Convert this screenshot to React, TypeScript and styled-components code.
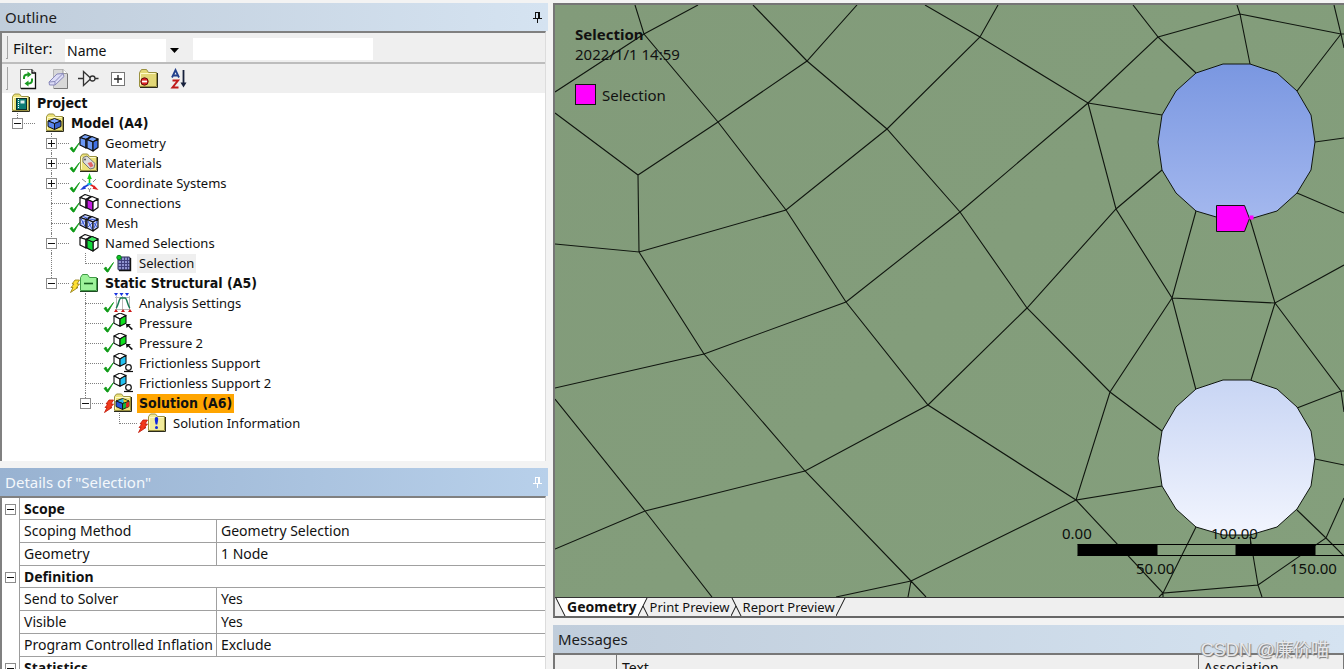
import React from 'react';
import styled, { createGlobalStyle, css } from 'styled-components';

const UI_FONT = '"Noto Sans", "Open Sans", "Noto Sans CJK SC", sans-serif';
const TREE_FONT = '"Noto Sans", "Open Sans", sans-serif';
const TREE_BOLD_FONT = '"DejaVu Sans Condensed", "Noto Sans", sans-serif';

const GlobalStyle = createGlobalStyle`
  * { box-sizing: border-box; }
  body {
    margin: 0;
    background: #f3f3f3;
    font-family: ${UI_FONT};
    color: #111;
  }
  button, input, select { font: inherit; color: inherit; }
`;

const Shell = styled.div`
  position: relative;
  display: grid;
  grid-template-columns: 548fr 796fr;
  height: 100vh;
  overflow: hidden;
`;

const SideColumn = styled.div`
  display: flex;
  flex-direction: column;
  gap: 7px;
  min-width: 0;
  min-height: 0;
  padding-top: 3px;
`;

const MainColumn = styled.main`
  display: flex;
  flex-direction: column;
  gap: 7px;
  min-width: 0;
  min-height: 0;
  padding: 3px 0 0 5px;
`;

const Panel = styled.section<{ $grow?: boolean; $height?: number }>`
  display: flex;
  flex-direction: column;
  min-height: 0;
  overflow: hidden;
  ${(p) => (p.$grow ? css`flex: 1;` : css`flex: 0 0 ${p.$height}px;`)}
`;

const TitleBar = styled.header<{ $active?: boolean }>`
  display: flex;
  flex: none;
  align-items: center;
  justify-content: space-between;
  height: 28px;
  padding: 0 5px;
  background: ${(p) =>
    p.$active
      ? 'linear-gradient(90deg, #98b2d1, #b8d0ea)'
      : 'linear-gradient(90deg, #c0cddb, #d5e3f1)'};
  color: ${(p) => (p.$active ? '#f4f8fc' : '#1c1c1c')};
`;

const Title = styled.h2`
  margin: 0;
  font-size: 15px;
  line-height: 20px;
  font-weight: 400;
`;

const PinButton = styled.button`
  display: flex;
  padding: 0;
  border: 0;
  background: none;
`;

const PanelBody = styled.div`
  display: flex;
  flex: 1;
  flex-direction: column;
  min-height: 0;
  margin-right: 2px;
  border: solid #808080;
  border-width: 2px 0 0 2px;
  border-right: 1px solid #dcdcdc;
  background: #fff;
`;

const Bar = styled.div<{ $ruled?: boolean }>`
  display: flex;
  flex: none;
  align-items: center;
  height: ${(p) => (p.$ruled ? 31 : 29)}px;
  padding-left: 4px;
  background: #efefef;
  ${(p) => p.$ruled && css`border-bottom: 2px solid #bdbdbd;`}
`;

const Grip = styled.span`
  width: 2px;
  height: 23px;
  border-right: 1px solid #a5a5a5;
  border-bottom: 1px solid #a5a5a5;
`;

const FilterLabel = styled.label`
  width: 52px;
  margin-left: 5px;
  font-size: 15px;
  line-height: 20px;
  white-space: nowrap;
`;

const SelectBox = styled.span`
  position: relative;
  display: flex;
  width: 119px;
  height: 23px;
  margin-top: 6px;
`;

const FilterSelect = styled.select`
  width: 100%;
  padding: 0 20px 0 2px;
  border: 0;
  border-radius: 0;
  appearance: none;
  background: linear-gradient(90deg, #fff calc(100% - 18px), #efefef calc(100% - 18px));
  font-size: 14px;
`;

const SelectArrow = styled.svg`
  position: absolute;
  top: 9px;
  right: 5px;
  pointer-events: none;
`;

const FilterInput = styled.input`
  width: 180px;
  height: 22px;
  margin: 2px 0 0 9px;
  padding: 0 4px;
  border: 0;
  background: #fff;
  font-size: 14px;
`;

const ToolGroup = styled.div`
  display: flex;
  align-items: center;
  gap: 8px;
  margin-left: 9px;
`;

const ToolButton = styled.button`
  display: flex;
  width: 22px;
  height: 22px;
  padding: 0;
  border: 0;
  background: none;
`;

const Tree = styled.ul`
  flex: 1;
  min-height: 0;
  margin: 0;
  padding: 0;
  overflow: hidden;
  list-style: none;
  font-family: ${TREE_FONT};
`;

const TreeRow = styled.li`
  display: flex;
  align-items: center;
  height: 20px;
`;

type GuideKind = 'blank' | 'line' | 'tee' | 'end';

const Guide = styled.span<{ $kind: GuideKind }>`
  position: relative;
  flex: none;
  width: 34px;
  height: 20px;
  ${(p) =>
    p.$kind !== 'blank' &&
    css`
      &::before {
        content: '';
        position: absolute;
        top: 0;
        left: 15px;
        height: ${p.$kind === 'end' ? 11 : 20}px;
        border-left: 1px dotted #808080;
      }
    `}
  ${(p) =>
    (p.$kind === 'tee' || p.$kind === 'end') &&
    css`
      &::after {
        content: '';
        position: absolute;
        top: 10px;
        left: 15px;
        width: 18px;
        border-top: 1px dotted #808080;
      }
    `}
`;

const Expander = styled.button<{ $open: boolean }>`
  position: relative;
  z-index: 1;
  display: block;
  width: 11px;
  height: 11px;
  margin: 5px 10px;
  padding: 0;
  border: 1px solid #8c8c8c;
  background:
    linear-gradient(#111, #111) center / 7px 1px no-repeat,
    ${(p) => (p.$open ? '' : 'linear-gradient(#111, #111) center / 1px 7px no-repeat,')}
    #fff;
`;

const StatusSlot = styled.span`
  display: flex;
  flex: none;
  width: 9px;
  height: 20px;
`;

const IconSlot = styled.span`
  display: flex;
  flex: none;
  width: 24px;
  height: 20px;
`;

const NodeLabel = styled.span<{ $bold?: boolean; $tone?: 'soft' | 'hot' }>`
  padding: 0 2px;
  background: ${(p) => (p.$tone === 'hot' ? '#ffa500' : p.$tone === 'soft' ? '#efefef' : 'transparent')};
  font-size: 13px;
  line-height: 19px;
  ${(p) =>
    p.$bold &&
    css`
      font-family: ${TREE_BOLD_FONT};
      font-size: 14px;
      font-weight: 700;
    `}
  white-space: nowrap;
`;

const PropertyTable = styled.table`
  width: 100%;
  border-collapse: separate;
  border-spacing: 0;
  table-layout: fixed;
  font-size: 14px;
  line-height: 20px;
`;

const GutterCol = styled.col`
  width: 18px;
`;

const NameCol = styled.col`
  width: 197px;
`;

const Gutter = styled.td`
  padding: 0;
  border-right: 1px solid #9c9c9c;
  ${Expander} { margin: 0 0 0 3px; }
`;

const GroupHead = styled.th`
  height: 22px;
  padding: 0 4px;
  border-bottom: 1px solid #a0a0a0;
  font-size: 14px;
  font-weight: 700;
  text-align: left;
`;

const PropName = styled.th`
  height: 23px;
  padding: 0 4px;
  border-right: 1px solid #a0a0a0;
  border-bottom: 1px solid #a0a0a0;
  font-weight: 400;
  text-align: left;
  white-space: nowrap;
`;

const PropValue = styled.td`
  padding: 0 4px;
  border-bottom: 1px solid #a0a0a0;
`;

const Viewport = styled.section`
  display: flex;
  flex: 1;
  flex-direction: column;
  min-height: 0;
  border: solid #757575;
  border-width: 2px 0 0 2px;
  border-bottom: 2px solid #666;
`;

const Canvas = styled.div`
  position: relative;
  flex: 1;
  min-height: 0;
  background: linear-gradient(135deg, #829b7a, #849f7c);
`;

const MeshDrawing = styled.svg`
  position: absolute;
  inset: 0;
  width: 100%;
  height: 100%;
`;

const Legend = styled.div`
  position: absolute;
  top: 19px;
  left: 20px;
  display: flex;
  flex-direction: column;
  font-size: 15px;
  line-height: 20px;
`;

const LegendKey = styled.div`
  display: flex;
  align-items: center;
  gap: 6px;
  margin-top: 20px;
`;

const Swatch = styled.span`
  width: 21px;
  height: 21px;
  border: 1px solid #111;
  background: #ff00ff;
`;

const TabStrip = styled.nav`
  display: flex;
  flex: none;
  align-items: stretch;
  height: 19px;
  border-top: 1px solid #333;
  background: #efefef;
`;

const Tab = styled.button<{ $active?: boolean }>`
  padding: 0 1px;
  border: 0;
  background: ${(p) => (p.$active ? '#fff' : 'transparent')};
  font-size: ${(p) => (p.$active ? 14 : 13)}px;
  line-height: 18px;
  font-weight: ${(p) => (p.$active ? 700 : 400)};
  white-space: nowrap;
`;

const TabEdge = styled.svg`
  flex: none;
  width: 11px;
  height: 18px;
`;

const MessageTable = styled.table`
  width: 100%;
  border-top: 2px solid #777;
  border-left: 2px solid #777;
  border-collapse: separate;
  border-spacing: 0;
  table-layout: fixed;
  background: #efefef;
  font-size: 14px;
  line-height: 20px;
`;

const MessageHead = styled.th<{ $width?: string }>`
  width: ${(p) => p.$width ?? 'auto'};
  height: 24px;
  padding: 2px 5px 0;
  border-right: 1px solid #777;
  font-weight: 400;
  text-align: left;
`;

const Watermark = styled.div`
  position: absolute;
  right: 15px;
  bottom: 5px;
  color: rgba(238, 238, 240, 0.95);
  font-family: "Liberation Sans", "Noto Sans CJK SC", sans-serif;
  font-size: 18px;
  line-height: 28px;
  text-shadow: 1px 1px 1px #777, -1px 0 0 #aaa;
  white-space: nowrap;
`;

/* ---------- icons ---------- */

const Pin = ({ color }: { color: string }) => (
  <svg width="11" height="13" viewBox="0 0 11 13" fill="none" stroke={color}>
    <path d="M3.5 1v6M3 1.5h5M7.5 1v6M6.500 1v6M1 7.5h9M5.5 8v4" />
  </svg>
);

const FolderBase = ({ fill = '#ece27a' }: { fill?: string }) => (
  <>
    <path d="M1.500 17.500V3.500L3.500 1H8.500L10.500 3.500H17.500V17.500Z" fill={fill} stroke="#9a9140" />
    <path d="M2.500 16V4.500H16.500" fill="none" stroke="#fffbc8" />
    <path d="M1 18.500H18.500V4" fill="none" stroke="#2b2b1c" />
  </>
);

const Cube = ({ x, y, s, top, left, right, stroke = '#111' }: {
  x: number; y: number; s: number; top: string; left: string; right: string; stroke?: string;
}) => (
  <g transform={`translate(${x} ${y}) scale(${s})`} stroke={stroke} strokeWidth={1.1 / s} strokeLinejoin="round">
    <path d="M0 2.500L5 0L10 2L5 5Z" fill={top} />
    <path d="M0 2.500L5 5V11L0 8.500Z" fill={left} />
    <path d="M5 5L10 2V8.500L5 11Z" fill={right} />
  </g>
);

/* Two adjoining blocks; `face` colours the contact side between them. */
const BoxPair = ({ top, side, front, face }: { top: string; side: string; front: string; face?: string }) => (
  <g stroke="#111" strokeWidth="1.200" strokeLinejoin="round">
    <path d="M1 4.500L6 1.500L12 3.500L7 6.500Z" fill={top} />
    <path d="M1 4.500L7 6.500V15L1 12Z" fill={side} />
    <path d="M7 6.500L12 3.500V12L7 15Z" fill={face ?? front} />
    <path d="M8 6.500L13 3.500L19 6L14 9Z" fill={top} />
    <path d="M8 6.500L14 9V18L8 15Z" fill={face ?? side} />
    <path d="M14 9L19 6V14.500L14 18Z" fill={front} />
  </g>
);

const icons: Record<string, React.ReactNode> = {
  project: (
    <>
      <FolderBase />
      <rect x="5.500" y="5.500" width="10" height="11" fill="#0c7c74" stroke="#0a2e2b" />
      <path d="M7.500 6v10" stroke="#fff" strokeDasharray="1 1" />
      <rect x="9.500" y="7.500" width="4" height="3" fill="#d9efec" />
    </>
  ),
  model: (
    <>
      <FolderBase />
      <g stroke="#111" strokeLinejoin="round">
        <path d="M3 8L9.500 5.500L16 8L9.500 10.500Z" fill="#7fa6ff" />
        <path d="M3 8L9.500 10.500V16.500L3 13.500Z" fill="#5b86ee" />
        <path d="M9.500 10.500L16 8V13.500L9.500 16.500Z" fill="#3761c9" />
      </g>
    </>
  ),
  geometry: <BoxPair top="#7aa4fa" side="#6a97f5" front="#3f70e4" />,
  materials: (
    <>
      <FolderBase />
      <path d="M4 4.500L8 3L16 10.500L15 15L11 16L4 9Z" fill="#dcdcdc" stroke="#777" />
      <path d="M8.500 10l4-1 2 4-3 1.500z" fill="#e06464" />
      <circle cx="6" cy="6.500" r="1" fill="#555" />
    </>
  ),
  coordinates: (
    <>
      <path d="M10.500 11V4" stroke="#12c412" strokeWidth="1.600" />
      <path d="M10.500 0l2.300 6H8.200Z" fill="#12d012" />
      <path d="M10.500 11l5 3" stroke="#e02020" strokeWidth="1.600" />
      <path d="M19.500 17l-6-1.200 1.800-3.200Z" fill="#e02020" />
      <path d="M10.500 11l-5 3" stroke="#1a3cd8" strokeWidth="1.600" />
      <path d="M1 17l6-1.200-1.800-3.200Z" fill="#1a3cd8" />
      <path d="M3 6l4 3M14 9l3-3M9 15l1.500 2 1.500-2M10.500 17v2" stroke="#888" />
      <path d="M8.500 11h4" stroke="#14b8d8" strokeWidth="2" />
    </>
  ),
  connections: <BoxPair top="#fff" side="#fff" front="#fff" face="#c41be0" />,
  mesh: (
    <>
      <BoxPair top="#c3cef9" side="#c3cef9" front="#c3cef9" />
      <path d="M2 5.500l4 8M2 11.500l4-4M4 3.500l5 2M9 8l4 8M9 14l4-4M15 10l3 4M15 15l3-7M10.500 6l6 1" stroke="#2b4fd6" strokeWidth="0.900" />
    </>
  ),
  named: (
    <>
      <BoxPair top="#fff" side="#fff" front="#fff" />
      <path d="M8 6.500L14 9V18L8 15Z" fill="#11d93a" stroke="#111" strokeLinejoin="round" />
      <path d="M8 6.500L13 3.500L19 6L14 9Z" fill="#3fe561" stroke="#111" strokeLinejoin="round" />
    </>
  ),
  selection: (
    <>
      <rect x="5" y="4" width="12" height="13" rx="1" fill="#8f93cf" stroke="#26264e" />
      <path d="M8.500 4v13M11.500 4v13M14.500 4v13M5 7.500h12M5 10.500h12M5 13.500h12" stroke="#40407c" />
      <path d="M17.500 5v12.500H6" fill="none" stroke="#111" strokeWidth="1.400" />
      <circle cx="6" cy="4.500" r="2.200" fill="#0ec222" stroke="#08801a" />
    </>
  ),
  structural: (
    <>
      <path d="M1.500 17.500V4.500L3.500 1.500H8.500L10.500 4.500H17.500V17.500Z" fill="#9df29a" stroke="#3f9a44" />
      <path d="M1 18.500H18.500V5" fill="none" stroke="#1d4a22" />
      <path d="M5 10.500h9" stroke="#155c1c" strokeWidth="1.600" />
    </>
  ),
  settings: (
    <>
      <path d="M1 0h4l-2 3zM6.500 0h4l-2 3zM12 0h4l-2 3z" fill="#1733e0" />
      <path d="M3.500 3v14M9.500 3v14M16.500 3v14M2 4.500h15M2 16.500h15" stroke="#b9b9b9" />
      <path d="M3 15C5 14 6 5 8 5h4C14 5 15 14 17 15" fill="none" stroke="#187a52" strokeWidth="1.500" />
      <path d="M1 19h4l-2-3zM8 19h4l-2-3zM15 19h4l-2-3z" fill="#cc1717" />
    </>
  ),
  pressure: (
    <>
      <Cube x={1} y={0} s={1.200} top="#fff" left="#fff" right="#0ee01e" />
      <path d="M13 11h5l-1.800 1.500L20 16l-1.500 1-3.200-3.500L13.500 15z" fill="#111" />
    </>
  ),
  support: (
    <>
      <Cube x={1} y={0} s={1.200} top="#fff" left="#fff" right="#22c2f2" />
      <circle cx="15.500" cy="14.500" r="2.800" fill="#fff" stroke="#111" strokeWidth="1.200" />
      <path d="M11 18.500h9" stroke="#111" strokeWidth="1.200" />
    </>
  ),
  solution: (
    <>
      <FolderBase />
      <g stroke="#111" strokeLinejoin="round" strokeWidth="0.900">
        <path d="M3 8L9.500 5.500L16 8L9.500 10.500Z" fill="#2fb8e8" />
        <path d="M3 8L9.500 10.500V16.500L3 13.500Z" fill="#2458e0" />
        <path d="M9.500 10.500L16 8V13.500L9.500 16.500Z" fill="#18b43a" />
      </g>
      <path d="M10 6l5 2-4 1.500z" fill="#f2d21a" />
      <path d="M13 10l3-1.500v5l-3 1.200z" fill="#e2261a" />
    </>
  ),
  info: (
    <>
      <FolderBase fill="#f2eb9a" />
      <path d="M9.500 4c2.500 0 1.800 3 .8 7.500h-1.600c-1-4.500-1.700-7.500.8-7.500z" fill="#1229e0" />
      <circle cx="9.500" cy="14.500" r="1.500" fill="#1229e0" />
    </>
  ),
};

const NodeIcon = ({ name }: { name: string }) => (
  <svg width="20" height="20" viewBox="0 0 20 20" fill="none">{icons[name]}</svg>
);

type Status = 'ok' | 'stale' | 'update';

const StatusIcon = ({ status }: { status: Status }) => {
  if (status === 'ok') {
    return (
      <svg width="10" height="20" viewBox="0 0 10 20" overflow="visible" fill="none">
        <path d="M0 15.500L2 14l1.500 3L9.500 9.500 4 19H3Z" fill="#0f9a16" stroke="#0f9a16" strokeWidth="0.800" />
      </svg>
    );
  }
  const fill = status === 'stale' ? '#ffe033' : '#f23a1c';
  const edge = status === 'stale' ? '#8f7a12' : '#c01808';
  return (
    <svg width="10" height="20" viewBox="0 0 10 20" overflow="visible">
      <path d="M5 7L9.500 7 7 11H9.500L6.500 14.500H8L0.500 19.500 3 14.500H1L4 11H2Z" fill={fill} stroke={edge} strokeWidth="0.800" />
    </svg>
  );
};

const toolIcons: { label: string; art: React.ReactNode }[] = [
  {
    label: 'Refresh tree',
    art: (
      <>
        <path d="M3.500 1.500H15L18.500 5V20.500H3.500Z" fill="#fff" stroke="#777" />
        <path d="M15 1.500V5H18.500V20.500H4" fill="none" stroke="#111" strokeWidth="1.300" />
        <path d="M7 11V9.500C7 7 9 6.500 11 6.500" fill="none" stroke="#1a9a22" strokeWidth="2" />
        <path d="M10.500 3.500l4 3-4 3z" fill="#1a9a22" />
        <path d="M15 10.500V12.500C15 15 13 15.500 11 15.500" fill="none" stroke="#1a9a22" strokeWidth="2" />
        <path d="M11.500 12.500l-4 3 4 3z" fill="#1a9a22" />
      </>
    ),
  },
  {
    label: 'Clear filter',
    art: (
      <>
        <path d="M6.500 1.500H16L20.500 5.500V20.500H6.500Z" fill="#d8d8d8" stroke="#b4b4b4" />
        <path d="M16 1.500V5.500H20.500" fill="#fff" stroke="#999" />
        <path d="M7 20.500H20.500V6" fill="none" stroke="#777" />
        <path d="M2 14L10 6L16 5.500L17 8.500L8 17L2.500 17Z" fill="#dcdcf6" stroke="#8888ba" />
        <path d="M2 14L8 13.500L16 5.500M8 13.500V17" fill="none" stroke="#8888ba" />
      </>
    ),
  },
  {
    label: 'Invert filter',
    art: (
      <>
        <path d="M1 10.500H6M6.500 3.500V17.500L14 10.500ZM17.500 10.500H21.500" fill="none" stroke="#333" strokeWidth="1.300" />
        <circle cx="15.500" cy="10.500" r="2.500" fill="#efefef" stroke="#333" strokeWidth="1.300" />
      </>
    ),
  },
  {
    label: 'Expand all',
    art: (
      <>
        <rect x="4.500" y="4.500" width="13" height="13" fill="#fff" stroke="#777" />
        <path d="M7 11H15M11 7V15" stroke="#222" strokeWidth="1.300" />
      </>
    ),
  },
  {
    label: 'Hide suppressed',
    art: (
      <>
        <path d="M2.500 18.500V4.500L4.500 1.500H9.500L11.500 4.500H19.500V18.500Z" fill="#e3d877" stroke="#9a9140" />
        <path d="M3.500 17V5.500H18.500" fill="none" stroke="#fffbc8" />
        <path d="M3 19.500H20.500V5" fill="none" stroke="#2b2b1c" />
        <circle cx="7.500" cy="13.500" r="3.700" fill="#dd2222" stroke="#5c1010" />
        <path d="M5 13.500h5" stroke="#fff" strokeWidth="1.800" />
      </>
    ),
  },
  {
    label: 'Sort ascending',
    art: (
      <>
        <path d="M5 9.500L8.500 2L12 9.500M6.200 7.500H10.800" fill="none" stroke="#23408c" strokeWidth="1.800" />
        <path d="M5.500 12.500H11L5.500 19.500H11.500" fill="none" stroke="#c01c1c" strokeWidth="2" />
        <path d="M16.500 2V16" stroke="#16203c" strokeWidth="1.800" />
        <path d="M13.500 14.500H19.500L16.500 19.500Z" fill="#16203c" />
      </>
    ),
  },
];

/* ---------- tree ---------- */

interface TreeItem {
  label: string;
  icon: string;
  guides: GuideKind[];
  open?: boolean;
  status?: Status;
  bold?: boolean;
  tone?: 'soft' | 'hot';
}

const tree: TreeItem[] = [
  { label: 'Project', icon: 'project', guides: [], bold: true },
  { label: 'Model (A4)', icon: 'model', guides: ['end'], open: true, bold: true },
  { label: 'Geometry', icon: 'geometry', guides: ['blank', 'tee'], open: false, status: 'ok' },
  { label: 'Materials', icon: 'materials', guides: ['blank', 'tee'], open: false, status: 'ok' },
  { label: 'Coordinate Systems', icon: 'coordinates', guides: ['blank', 'tee'], open: false, status: 'ok' },
  { label: 'Connections', icon: 'connections', guides: ['blank', 'tee'], status: 'ok' },
  { label: 'Mesh', icon: 'mesh', guides: ['blank', 'tee'], status: 'ok' },
  { label: 'Named Selections', icon: 'named', guides: ['blank', 'tee'], open: true },
  { label: 'Selection', icon: 'selection', guides: ['blank', 'line', 'end'], status: 'ok', tone: 'soft' },
  { label: 'Static Structural (A5)', icon: 'structural', guides: ['blank', 'end'], open: true, status: 'stale', bold: true },
  { label: 'Analysis Settings', icon: 'settings', guides: ['blank', 'blank', 'tee'], status: 'ok' },
  { label: 'Pressure', icon: 'pressure', guides: ['blank', 'blank', 'tee'], status: 'ok' },
  { label: 'Pressure 2', icon: 'pressure', guides: ['blank', 'blank', 'tee'], status: 'ok' },
  { label: 'Frictionless Support', icon: 'support', guides: ['blank', 'blank', 'tee'], status: 'ok' },
  { label: 'Frictionless Support 2', icon: 'support', guides: ['blank', 'blank', 'tee'], status: 'ok' },
  { label: 'Solution (A6)', icon: 'solution', guides: ['blank', 'blank', 'end'], open: true, status: 'update', bold: true, tone: 'hot' },
  { label: 'Solution Information', icon: 'info', guides: ['blank', 'blank', 'blank', 'end'], status: 'update' },
];

const TreeNode = ({ item }: { item: TreeItem }) => (
  <TreeRow>
    {item.guides.map((kind, i) => (
      <Guide key={i} $kind={kind}>
        {i === item.guides.length - 1 && item.open !== undefined && (
          <Expander $open={item.open} aria-label={`Toggle ${item.label}`} />
        )}
      </Guide>
    ))}
    <StatusSlot>{item.status && <StatusIcon status={item.status} />}</StatusSlot>
    <IconSlot><NodeIcon name={item.icon} /></IconSlot>
    <NodeLabel $bold={item.bold} $tone={item.tone}>{item.label}</NodeLabel>
  </TreeRow>
);

/* ---------- details ---------- */

const details: { group: string; rows: [string, string][] }[] = [
  { group: 'Scope', rows: [['Scoping Method', 'Geometry Selection'], ['Geometry', '1 Node']] },
  {
    group: 'Definition',
    rows: [['Send to Solver', 'Yes'], ['Visible', 'Yes'], ['Program Controlled Inflation', 'Exclude']],
  },
  { group: 'Statistics', rows: [] },
];

/* ---------- mesh ---------- */

const HOLE =
  '1223,64 1250,64 1277,73 1297,91 1311,115 1315,142 1311,170 1297,193 1277,211 1250,219 1223,219 1196,211 1176,193 1162,170 1158,142 1162,115 1176,91 1196,73';

const meshPath = [
  'M635 5L644 34L718 122L786 210L846 302L928 405L1076 500L1163 593L1159 597M1163 593V597',
  'M698 5L644 34L555 92',
  'M753 5L807 61L887 129L960 212L1027 308L1110 392L1162 431',
  'M857 5L807 61L718 122L638 175L555 113M638 175L639 252L555 244',
  'M639 252L786 210L887 129L980 37L998 5',
  'M925 5L980 37L1088 103L1162 115',
  'M1088 103L1116 209L1172 298L1196 390',
  'M639 252L704 354L805 471L911 581L926 597M911 581L908 597M911 581L836 597',
  'M555 388L704 354L846 302L960 212L1088 103L1158 37L1133 5',
  'M1196 73L1158 37L1240 14L1341 34H1344',
  'M1237 5L1240 14L1250 64M1334 5L1341 34L1344 48M1341 34L1297 91',
  'M1315 142L1344 138M1297 193L1344 213',
  'M1162 170L1116 209L1027 308L928 405L805 471L645 511L555 549',
  'M555 399L645 511L712 597',
  'M1196 211L1172 298L1275 303L1344 265M1250 219L1275 303L1251 380',
  'M1172 298L1110 392L1076 500L1162 486M1076 500L911 581',
  'M1275 303L1341 391L1344 412M1297 408L1341 391H1344M1315 459L1344 465',
  'M1297 510L1326 538L1344 556M1344 498L1326 538L1258 585L1262 597',
  'M1196 527L1163 593L1258 585L1250 537',
].join('');

const ModelView = () => (
  <MeshDrawing viewBox="555 5 789 592" preserveAspectRatio="xMinYMin slice" fill="none">
    <defs>
      <linearGradient id="upperHole" x1="0" y1="0" x2="0" y2="1">
        <stop offset="0" stopColor="#7a97e1" />
        <stop offset="1" stopColor="#a4b8ee" />
      </linearGradient>
      <linearGradient id="lowerHole" x1="0" y1="0" x2="0" y2="1">
        <stop offset="0" stopColor="#c8d5f4" />
        <stop offset="1" stopColor="#f2f5fe" />
      </linearGradient>
    </defs>
    <path d={meshPath} stroke="#10160f" strokeWidth="1.100" />
    <polygon points={HOLE} fill="url(#upperHole)" stroke="#10160f" />
    <polygon points={HOLE} transform="translate(0 316)" fill="url(#lowerHole)" stroke="#10160f" />
    <g transform="translate(0.5 0.5)">
      <path d="M1250 536V544" stroke="#10160f" />
      <path d="M1216 205H1244L1249 218L1244 231H1216Z" fill="#ff00ff" stroke="#111" />
      <rect x="1249" y="215" width="4" height="4" fill="#ff00ff" />
      <path d="M1077 544H1344M1077 555H1344" stroke="#000" />
      <path d="M1077 544H1157V555H1077ZM1235 544H1315V555H1235Z" fill="#000" />
    </g>
    <g fill="#0c0f0c" fontFamily="Noto Sans, Open Sans, sans-serif" fontSize="15">
      <text x="1062" y="539">0.00</text>
      <text x="1211" y="539">100.00</text>
      <text x="1136" y="574">50.00</text>
      <text x="1290" y="574">150.00</text>
    </g>
  </MeshDrawing>
);

export default function App() {
  return (
    <>
      <GlobalStyle />
      <Shell>
        <SideColumn>
          <Panel $grow>
            <TitleBar>
              <Title>Outline</Title>
              <PinButton aria-label="Pin outline"><Pin color="#111" /></PinButton>
            </TitleBar>
            <PanelBody>
              <Bar $ruled>
                <Grip />
                <FilterLabel htmlFor="filter-kind">Filter:</FilterLabel>
                <SelectBox>
                  <FilterSelect id="filter-kind" defaultValue="Name">
                    <option>Name</option>
                  </FilterSelect>
                  <SelectArrow width="9" height="6" viewBox="0 0 9 6">
                    <path d="M0 0H9L4.500 5Z" fill="#000" />
                  </SelectArrow>
                </SelectBox>
                <FilterInput type="text" aria-label="Filter text" />
              </Bar>
              <Bar>
                <Grip />
                <ToolGroup>
                  {toolIcons.map((tool) => (
                    <ToolButton key={tool.label} aria-label={tool.label}>
                      <svg width="22" height="22" viewBox="0 0 22 22">{tool.art}</svg>
                    </ToolButton>
                  ))}
                </ToolGroup>
              </Bar>
              <Tree>
                {tree.map((item) => <TreeNode key={item.label} item={item} />)}
              </Tree>
            </PanelBody>
          </Panel>

          <Panel $height={201}>
            <TitleBar $active>
              <Title>Details of "Selection"</Title>
              <PinButton aria-label="Pin details"><Pin color="#fff" /></PinButton>
            </TitleBar>
            <PanelBody>
              <PropertyTable>
                <colgroup>
                  <GutterCol />
                  <NameCol />
                  <col />
                </colgroup>
                <tbody>
                  {details.map(({ group, rows }) => (
                    <React.Fragment key={group}>
                      <tr>
                        <Gutter><Expander $open aria-label={`Toggle ${group}`} /></Gutter>
                        <GroupHead colSpan={2}>{group}</GroupHead>
                      </tr>
                      {rows.map(([name, value]) => (
                        <tr key={name}>
                          <Gutter />
                          <PropName scope="row">{name}</PropName>
                          <PropValue>{value}</PropValue>
                        </tr>
                      ))}
                    </React.Fragment>
                  ))}
                </tbody>
              </PropertyTable>
            </PanelBody>
          </Panel>
        </SideColumn>

        <MainColumn>
          <Viewport>
            <Canvas>
              <ModelView />
              <Legend>
                <strong>Selection</strong>
                <span>2022/1/1 14:59</span>
                <LegendKey><Swatch />Selection</LegendKey>
              </Legend>
            </Canvas>
            <TabStrip>
              <TabEdge viewBox="0 0 11 18">
                <path d="M1 0H11V18H10Z" fill="#fff" />
                <path d="M1 0L10 18" stroke="#111" />
              </TabEdge>
              <Tab $active>Geometry</Tab>
              <TabEdge viewBox="0 0 11 18">
                <path d="M0 0H9L0 18Z" fill="#fff" />
                <path d="M9 0L0 18M5 8L10 18" stroke="#111" fill="none" />
              </TabEdge>
              <Tab>Print Preview</Tab>
              <TabEdge viewBox="0 0 11 18">
                <path d="M1 0L10 18M5 8L0 18" stroke="#111" fill="none" />
              </TabEdge>
              <Tab>Report Preview</Tab>
              <TabEdge viewBox="0 0 11 18">
                <path d="M9 0L0 18" stroke="#111" />
              </TabEdge>
            </TabStrip>
          </Viewport>

          <Panel $height={44}>
            <TitleBar>
              <Title>Messages</Title>
            </TitleBar>
            <MessageTable>
              <thead>
                <tr>
                  <MessageHead $width="62px" aria-label="Severity" />
                  <MessageHead>Text</MessageHead>
                  <MessageHead $width="18.400%">Association</MessageHead>
                </tr>
              </thead>
            </MessageTable>
          </Panel>
        </MainColumn>
        <Watermark>CSDN @廉价喵</Watermark>
      </Shell>
    </>
  );
}
